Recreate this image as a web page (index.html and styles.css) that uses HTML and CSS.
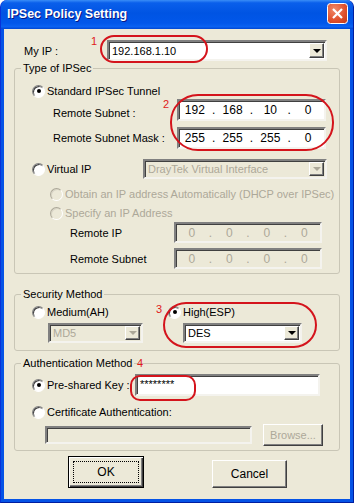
FILE: index.html
```html
<!DOCTYPE html>
<html>
<head>
	<title>IPSec Policy Setting</title>
	<link rel="stylesheet" href="styles.css">
</head>
<body>
	<div class="window">
		<div class="titlebar">
			<span class="title">IPSec Policy Setting</span>
			<svg class="close" width="21" height="21" viewBox="0 0 21 21">
				<defs>
					<radialGradient id="cg" cx="0.35" cy="0.3" r="0.9">
						<stop offset="0" stop-color="#F08A6A"/>
						<stop offset="0.6" stop-color="#E0502C"/>
						<stop offset="1" stop-color="#C23A18"/>
					</radialGradient>
				</defs>
				<rect x="0.5" y="0.5" width="20" height="20" rx="3" fill="url(#cg)" stroke="#fff"/>
				<path d="M6 6 L15 15 M15 6 L6 15" stroke="#fff" stroke-width="2.2"/>
			</svg>
		</div>
		<div class="client">
			<div class="myip">
				<span class="lbl">My IP :</span>
				<div class="combo"><span class="val">192.168.1.10</span><span class="arrow"></span></div>
			</div>

			<fieldset class="group type">
				<legend>Type of IPSec</legend>
				<div class="opt std"><span class="radio on"></span>Standard IPSec Tunnel</div>
				<div class="iprow subnet">
					<span class="lbl">Remote Subnet :</span>
					<div class="ip"><span>192</span><i>.</i><span>168</span><i>.</i><span>10</span><i>.</i><span>0</span></div>
				</div>
				<div class="iprow mask">
					<span class="lbl">Remote Subnet Mask :</span>
					<div class="ip"><span>255</span><i>.</i><span>255</span><i>.</i><span>255</span><i>.</i><span>0</span></div>
				</div>
				<div class="virtual">
					<div class="opt"><span class="radio"></span>Virtual IP</div>
					<div class="combo off"><span class="val">DrayTek Virtual Interface</span><span class="arrow"></span></div>
				</div>
				<div class="opt sub dis obtain"><span class="radio off"></span>Obtain an IP address Automatically (DHCP over IPSec)</div>
				<div class="opt sub dis specify"><span class="radio off"></span>Specify an IP Address</div>
				<div class="iprow small rip">
					<span class="lbl">Remote IP</span>
					<div class="ip off"><span>0</span><i>.</i><span>0</span><i>.</i><span>0</span><i>.</i><span>0</span></div>
				</div>
				<div class="iprow small rsub">
					<span class="lbl">Remote Subnet</span>
					<div class="ip off"><span>0</span><i>.</i><span>0</span><i>.</i><span>0</span><i>.</i><span>0</span></div>
				</div>
			</fieldset>

			<fieldset class="group security">
				<legend>Security Method</legend>
				<div class="pair">
					<div class="opt"><span class="radio"></span>Medium(AH)</div>
					<div class="opt"><span class="radio on"></span>High(ESP)</div>
				</div>
				<div class="pair combos">
					<div class="combo off md5"><span class="val">MD5</span><span class="arrow"></span></div>
					<div class="combo des"><span class="val">DES</span><span class="arrow"></span></div>
				</div>
			</fieldset>

			<fieldset class="group auth">
				<legend>Authentication Method</legend>
				<div class="psk">
					<div class="opt"><span class="radio on"></span>Pre-shared Key :</div>
					<div class="text">********</div>
				</div>
				<div class="opt cert"><span class="radio"></span>Certificate Authentication:</div>
				<div class="certrow">
					<div class="text off"></div>
					<button class="btn browse" disabled>Browse...</button>
				</div>
			</fieldset>

			<div class="buttons">
				<button class="btn default">OK</button>
				<button class="btn">Cancel</button>
			</div>

			<span class="ring r1"></span><span class="num n1">1</span>
			<span class="ring r2"></span><span class="num n2">2</span>
			<span class="ring r3"></span><span class="num n3">3</span>
			<span class="ring r4"></span><span class="num n4">4</span>
		</div>
	</div>
</body>
</html>
```

FILE: styles.css
```css
html, body {
	margin: 0px;
	padding: 0px;
	background: #fff;
}
* {
	box-sizing: border-box;
}
body {
	font-family: "Liberation Sans", Arial, sans-serif;
	font-size: 11px;
	color: #000;
}
.window {
	width: 354px;
	height: 503px;
	display: flex;
	flex-direction: column;
	background: #0553E6;
	border-radius: 7px 7px 0 0;
	border-left: 1px solid #0831D9;
	border-right: 1px solid #001EA0;
	border-bottom: 1px solid #001EA0;
}
.titlebar {
	height: 29px;
	flex: none;
	display: flex;
	align-items: center;
	justify-content: space-between;
	padding: 0 5px 2px 6px;
	border-radius: 7px 7px 0 0;
	background: linear-gradient(to bottom, #3A8DF7 0%, #0A5FEB 10%, #0054E3 45%, #0157EA 80%, #0A62F2 92%, #0046D2 100%);
}
.title {
	color: #fff;
	font-weight: bold;
	font-size: 12.5px;
	text-shadow: 1px 1px #0A1883;
}
.close {
	display: block;
}
.client {
	flex: 1;
	position: relative;
	margin: 0 3px 3px 3px;
	background: #ECE9D8;
	padding-top: 11px;
}

/* my ip */
.myip {
	display: grid;
	grid-template-columns: 83px 220px;
	height: 21px;
	padding-left: 20px;
	align-items: center;
}

/* controls */
.combo {
	height: 100%;
	display: flex;
	align-items: center;
	justify-content: space-between;
	background: #fff;
	border: 2px solid;
	border-color: #808080 #F4F3EE #F4F3EE #808080;
	box-shadow: inset 1px 1px #404040;
	padding: 0 1px 0 3px;
}
.combo .arrow {
	width: 15px;
	height: calc(100% - 2px);
	background: #ECE9D8;
	border: 1px solid;
	border-color: #fff #404040 #404040 #fff;
	box-shadow: inset -1px -1px #808080;
	position: relative;
}
.combo .arrow::after {
	content: "";
	position: absolute;
	left: 3px;
	top: 50%;
	margin-top: -2px;
	border-left: 4px solid transparent;
	border-right: 4px solid transparent;
	border-top: 4px solid #000;
}
.combo.off {
	background: #ECE9D8;
	color: #ACA899;
}
.combo.off .arrow::after {
	border-top-color: #ACA899;
}
.text {
	height: 100%;
	background: #fff;
	border: 2px solid;
	border-color: #808080 #F4F3EE #F4F3EE #808080;
	box-shadow: inset 1px 1px #404040;
	padding: 2px 2px 0 3px;
}
.text.off {
	background: #ECE9D8;
}

.ip {
	height: 100%;
	display: flex;
	align-items: center;
	background: #fff;
	border: 2px solid;
	border-color: #808080 #F4F3EE #F4F3EE #808080;
	box-shadow: inset 1px 1px #404040;
	font-size: 12px;
}
.ip span {
	flex: 1;
	text-align: center;
}
.ip i {
	font-style: normal;
	width: 6px;
	text-align: center;
}
.ip.off {
	background: #ECE9D8;
	color: #ACA899;
}

.opt {
	display: flex;
	align-items: center;
	height: 14px;
	white-space: nowrap;
}
.radio {
	width: 13px;
	height: 13px;
	flex: none;
	margin-right: 2px;
	border-radius: 50%;
	background: #fff;
	border: 1px solid;
	border-color: #808080 #fff #fff #808080;
	box-shadow: inset 1px 1px #404040;
	display: flex;
	align-items: center;
	justify-content: center;
}
.radio.on::after {
	content: "";
	width: 4px;
	height: 4px;
	border-radius: 50%;
	background: #000;
}
.radio.off {
	background: #ECE9D8;
	border-color: #ACA899 #fff #fff #ACA899;
	box-shadow: inset 1px 1px #D8D5C6;
}
.dis {
	color: #ACA899;
}

/* groups */
.group {
	margin: 0 10px 0 10px;
	padding: 0 0 4px 0;
	border: 1px solid #C9C6B6;
	border-radius: 3px;
	min-width: 0;
}
.group legend {
	line-height: 14px;
	padding: 0 2px;
	margin-left: 6px;
}
.type .std {
	margin: 9px 0 0 17px;
}
.iprow {
	display: grid;
	grid-template-columns: 124px 149px;
	padding-left: 38px;
	align-items: center;
	height: 22px;
}
.iprow.subnet {
	margin-top: 1px;
}
.iprow.subnet .lbl {
	padding-top: 6px;
}
.iprow.mask {
	margin-top: 6px;
}
.virtual {
	display: grid;
	grid-template-columns: 111px 184px;
	padding-left: 17px;
	align-items: center;
	height: 20px;
	margin-top: 10px;
}
.opt.sub {
	margin-left: 35px;
}
.obtain {
	margin-top: 8px;
}
.specify {
	margin-top: 5px;
}
.iprow.small {
	grid-template-columns: 104px 148px;
	padding-left: 55px;
	height: 21px;
}
.iprow.rip {
	margin-top: 2px;
}
.iprow.rsub {
	margin-top: 5px;
}

.security {
	margin-top: 13px;
	padding-bottom: 7px;
}
.pair {
	display: grid;
	grid-template-columns: 136px 1fr;
	padding-left: 17px;
	margin-top: 4px;
}
.pair.combos {
	height: 20px;
}
.md5 {
	margin-left: 16px;
	width: 95px;
}
.des {
	margin-left: 15px;
	width: 119px;
}

.auth {
	margin-top: 5px;
}
.psk {
	display: grid;
	grid-template-columns: 103px 185px;
	padding-left: 17px;
	align-items: center;
	height: 22px;
	margin-top: 4px;
}
.cert {
	margin: 9px 0 0 17px;
}
.certrow {
	display: flex;
	align-items: center;
	height: 22px;
	margin: 5px 0 0 30px;
}
.certrow .text {
	width: 207px;
	height: 18px;
}
.btn {
	font: inherit;
	color: #000;
	background: #ECE9D8;
	border: 1px solid;
	border-color: #fff #404040 #404040 #fff;
	box-shadow: inset -1px -1px #808080;
	padding: 0;
}
.btn.browse {
	width: 60px;
	height: 22px;
	margin-left: 11px;
	color: #ACA899;
}

.buttons {
	display: flex;
	align-items: flex-end;
	margin: 5px 0 0 64px;
	height: 32px;
	gap: 68px;
}
.buttons .btn {
	width: 75px;
	height: 28px;
	font-size: 12px;
}
.buttons .btn.default {
	width: 76px;
	height: 32px;
	border: 1px solid #000;
	box-shadow: inset 1px 1px #fff, inset -1px -1px #404040, inset -2px -2px #808080;
	position: relative;
}
.btn.default::after {
	content: "";
	position: absolute;
	left: 4px;
	right: 4px;
	top: 4px;
	bottom: 4px;
	border: 1px dotted #000;
}

/* red annotations */
.ring {
	position: absolute;
	border: 2px solid #D4141C;
}
.num {
	position: absolute;
	color: #E01A1A;
	font-size: 11px;
	line-height: 11px;
}
.r1 {
	left: 96px;
	top: 6px;
	width: 108px;
	height: 28px;
	border-radius: 14px;
}
.n1 {
	left: 87px;
	top: 7px;
}
.r2 {
	left: 166px;
	top: 65px;
	width: 164px;
	height: 57px;
	border-radius: 28px;
}
.n2 {
	left: 159px;
	top: 70px;
}
.r3 {
	left: 159px;
	top: 273px;
	width: 154px;
	height: 46px;
	border-radius: 23px;
}
.n3 {
	left: 152px;
	top: 275px;
}
.r4 {
	left: 126px;
	top: 346px;
	width: 66px;
	height: 26px;
	border-radius: 10px;
}
.n4 {
	left: 133px;
	top: 329px;
}
```
